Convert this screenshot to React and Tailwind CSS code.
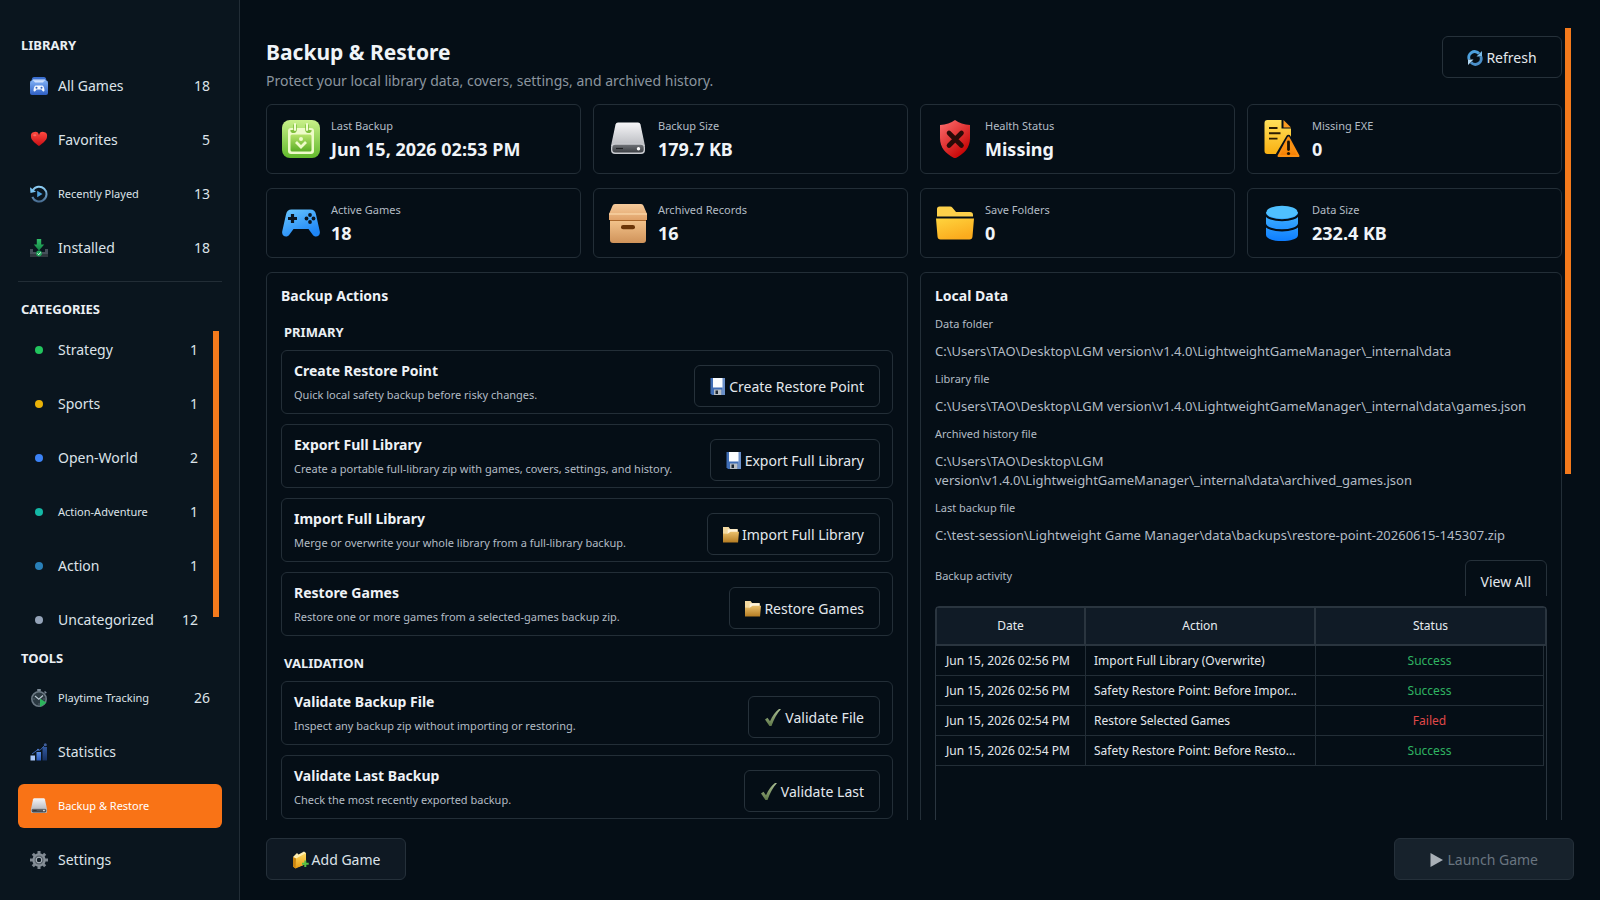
const Gradient = ({ id, from, to, x2 = 0, y2 = 1 }) => (
    <linearGradient id={id} x1="0" y1="0" x2={x2} y2={y2}>
        <stop offset="0" stopColor={from} />
        <stop offset="1" stopColor={to} />
    </linearGradient>
);

/* Sidebar icons */

const AllGamesIcon = () => (
    <svg viewBox="0 0 18 18" className="size-[18px]">
        <defs><Gradient id="ag" from="#7fb0f5" to="#2f5fc4" /></defs>
        <path d="M2 1.5Q2.2 0 4 0h10q1.800 0 2 1.500L16.500 4H1.500z" fill="#3b6fd0" />
        <path d="M3 2.500h12l1 2H2z" fill="#dbe9ff" />
        <rect y="3.500" width="18" height="14.500" rx="2" fill="url(#ag)" />
        <path d="M3.500 3.500h11L13 5.500H5z" fill="#cfe0fb" />
        <path d="M6 8.500h6c1.500 0 2 1.500 2.500 4.500.2 1.600-1.400 2-2.200.8l-.8-1.300h-5l-.8 1.300c-.8 1.200-2.400.8-2.200-.8C4 10 4.500 8.500 6 8.500z" fill="#f4f8ff" />
        <circle cx="6.500" cy="10.700" r="1" fill="#3263bd" />
        <circle cx="11.500" cy="10.700" r="1" fill="#3263bd" />
    </svg>
);

const HeartIcon = () => (
    <svg viewBox="0 0 18 18" className="size-[18px]">
        <defs><Gradient id="ht" from="#ff4a40" to="#c80d14" /></defs>
        <path d="M9 15C5 12 1 9 1 5.700a4 4 0 0 1 8-1.500A4 4 0 0 1 17 5.700c0 3.300-4 6.300-8 9.300z" fill="url(#ht)" />
        <ellipse cx="4.800" cy="4.300" rx="1.600" ry="1" fill="#ff8a80" opacity=".6" />
    </svg>
);

const RecentIcon = () => (
    <svg viewBox="0 0 18 18" className="size-[18px]">
        <defs><Gradient id="rc" from="#8fd0f7" to="#4a6f95" /></defs>
        <path d="M2.800 5.200A7.400 7.400 0 1 1 2.300 12" fill="none" stroke="url(#rc)" strokeWidth="2" />
        <path d="M0 2.300l.5 5.700 5.500-1.300z" fill="#7cc5f2" />
        <path d="M7.200 5.700v6.600l5.300-3.300z" fill="#4d9fdc" />
    </svg>
);

const InstalledIcon = () => (
    <svg viewBox="0 0 18 18" className="size-[18px]">
        <defs><Gradient id="in" from="#33c06b" to="#128443" /></defs>
        <path d="M0 10h3v3h3l1 2h4l1-2h3v-3h3v8H0z" fill="#46505a" />
        <path d="M0 15h18v3H0z" fill="#30383f" />
        <path d="M6.800 0h4.400v5.500h3L9 11.500 3.800 5.500h3z" fill="url(#in)" />
        <circle cx="9" cy="14.500" r="2.900" fill="#21a35a" />
        <path d="M7.500 14.500l1.200 1.200 2-2.300" fill="none" stroke="#eafff2" strokeWidth="1" />
    </svg>
);

const PlaytimeIcon = () => (
    <svg viewBox="0 0 18 18" className="size-[18px]">
        <path d="M7.200 0h3.600v2.500H7.200z" fill="#7d8b98" />
        <path d="M14.500 2.500l1.800 1.600" stroke="#7d8b98" strokeWidth="1.500" />
        <circle cx="9" cy="10" r="7.200" fill="#2b3942" stroke="#6b7984" strokeWidth="1.600" />
        <path d="M5 7l3.800 3.200L13 6.500" fill="none" stroke="#b7c5cf" strokeWidth="1.200" />
        <path d="M3.500 10h1M9 15.500v-1M13.500 10h1" stroke="#7a8893" />
        <path d="M10 9.500v8.500l6.500-4.200z" fill="#2cb45c" />
    </svg>
);

const StatsIcon = () => (
    <svg viewBox="0 0 18 18" className="size-[18px]">
        <defs>
            <Gradient id="st" from="#5b8fe8" to="#2a57b5" />
            <Gradient id="st2" from="#31589f" to="#17305f" />
        </defs>
        <rect x=".5" y="12.500" width="4.500" height="5" fill="#a9c8fa" />
        <rect x="6.500" y="9" width="4.500" height="8.500" fill="url(#st)" />
        <rect x="12.500" y="4" width="4.500" height="13.500" fill="url(#st2)" />
        <path d="M2 11l6-4.500 2 .8L15 2" fill="none" stroke="#3a63b0" strokeWidth="1" />
        <circle cx="15.300" cy="1.800" r="1.500" fill="#41609c" />
        <circle cx="8" cy="6.700" r="1" fill="#4f78c6" />
    </svg>
);

const DriveIcon = ({ className = "size-[18px]" }) => (
    <svg viewBox="0 0 38 38" className={className}>
        <defs>
            <Gradient id="dr" from="#f6f6f8" to="#b9bbc0" />
            <Gradient id="dr2" from="#6d7075" to="#3c3f44" />
        </defs>
        <path d="M6.500 4.500Q7 2.500 9 2.500h20q2 0 2.500 2L36 26H2z" fill="url(#dr)" />
        <rect x="2" y="23.500" width="34" height="10.500" rx="4" fill="#c9cbd0" />
        <rect x="3.300" y="24.800" width="31.400" height="7.800" rx="3" fill="url(#dr2)" />
        <path d="M7 28.500h7" stroke="#1d1f22" strokeWidth="1.200" />
        <circle cx="29.500" cy="28.700" r="1.700" fill="#fff" />
    </svg>
);

const GearIcon = () => (
    <svg viewBox="0 0 18 18" className="size-[18px]">
        <g stroke="#7f8891" strokeWidth="3">
            <path d="M9 0v18M0 9h18M2.800 2.800l12.400 12.400M15.200 2.800L2.800 15.200" />
        </g>
        <circle cx="9" cy="9" r="6.700" fill="#858e97" />
        <circle cx="9" cy="9" r="4.500" fill="#59626b" />
        <circle cx="9" cy="9" r="2.800" fill="#101b24" stroke="#b5bec6" strokeWidth="1" />
    </svg>
);

/* Stat card icons */

const CalendarIcon = () => (
    <svg viewBox="0 0 38 38" className="size-[38px]">
        <defs>
            <Gradient id="cl" from="#c9f08a" to="#62b92b" />
            <Gradient id="cl2" from="#b6e36a" to="#5cae26" />
        </defs>
        <rect width="38" height="38" rx="8" fill="url(#cl)" />
        <rect x="6" y="8" width="26" height="26" rx="3" fill="#eefbc9" />
        <rect x="8.500" y="14.500" width="21" height="17" rx="1.500" fill="url(#cl2)" />
        <path d="M13 4.500v5a1.500 1.500 0 0 1-3 .5M25 4.500v5a1.500 1.500 0 0 0 3 .5" fill="none" stroke="#7fbf3c" strokeWidth="3.600" />
        <path d="M13 4v6M25 4v6" stroke="#f2fdd3" strokeWidth="2" strokeLinecap="round" />
        <circle cx="19" cy="19" r="2" fill="#eefbc9" />
        <path d="M14 22l5 5 5-5" fill="none" stroke="#eefbc9" strokeWidth="2.800" />
    </svg>
);

const ShieldIcon = () => (
    <svg viewBox="0 0 38 38" className="size-[38px]">
        <defs><Gradient id="sh" from="#ff7070" to="#c40000" x2={0.7} /></defs>
        <path d="M19 0c4 3 9 4.700 15 5v13c0 10-6 16-15 20.500C10 34 4 28 4 18V5c6-.3 11-2 15-5z" fill="url(#sh)" />
        <path d="M13 13l12.500 12.500M25.500 13L13 25.500" stroke="#2a0b08" strokeWidth="4.600" strokeLinecap="round" />
    </svg>
);

const MissingFileIcon = () => (
    <svg viewBox="0 0 38 38" className="size-[38px]">
        <defs>
            <Gradient id="mf" from="#ffe05a" to="#f9b012" />
            <Gradient id="mf2" from="#ffac2e" to="#f57c00" />
        </defs>
        <path d="M4.500 0H18.500v8.500H28V34H4.500Q1.500 34 1.500 31V3q0-3 3-3z" fill="url(#mf)" />
        <path d="M20.500 0L28 7.500h-7.500z" fill="#fb9b20" />
        <path d="M6 8h8.500M6 13.300h11.500M6 18.600h8.500" stroke="#2b1d03" strokeWidth="1.900" />
        <path d="M25.500 17L36 36.500H14z" fill="#06101a" stroke="#06101a" strokeWidth="4.500" strokeLinejoin="round" />
        <path d="M25.500 17.500L35.500 36h-20z" fill="url(#mf2)" stroke="#fb8f12" strokeWidth="2" strokeLinejoin="round" />
        <path d="M25.500 22v7.500" stroke="#1d1203" strokeWidth="2.800" strokeLinecap="round" />
        <circle cx="25.500" cy="33.500" r="1.600" fill="#1d1203" />
    </svg>
);

const ControllerIcon = () => (
    <svg viewBox="0 0 38 38" className="size-[38px]">
        <defs><Gradient id="co" from="#6cc8ff" to="#1e86f7" x2={0.6} /></defs>
        <path d="M9.500 5.500h19q4.500 0 5.500 5l3.800 17c.8 4.500-4.500 7-7.300 3l-4-5.500h-15l-4 5.500C4.700 34.500-.6 32 .2 27.500L4 10.500q1-5 5.500-5z" fill="url(#co)" />
        <path d="M10.500 10v9M6 14.500h9" stroke="#0b1520" strokeWidth="3.200" />
        <circle cx="28" cy="11" r="1.900" fill="#0b1520" />
        <circle cx="28" cy="18" r="1.900" fill="#0b1520" />
        <circle cx="24.500" cy="14.500" r="1.900" fill="#0b1520" />
        <circle cx="31.500" cy="14.500" r="1.900" fill="#0b1520" />
    </svg>
);

const ArchiveIcon = () => (
    <svg viewBox="0 0 38 39" className="h-[39px] w-[38px]">
        <defs>
            <Gradient id="ar" from="#f6c891" to="#d0935a" />
            <Gradient id="ar2" from="#f6cb9c" to="#e0a269" />
        </defs>
        <rect x="1" y="14" width="36" height="25" rx="3" fill="url(#ar)" />
        <path d="M1 13.500h36v3.500H1z" fill="#a9662b" />
        <path d="M6 0h26q2 0 2.500 1.800L38 10v6H0v-6l3.500-8.200Q4 0 6 0z" fill="url(#ar2)" />
        <path d="M0 10h38" stroke="#ffe0b4" strokeWidth="1" />
        <rect x="12" y="21" width="14" height="4.300" rx="2.100" fill="#6b3508" />
    </svg>
);

const FolderIcon = () => (
    <svg viewBox="0 0 38 38" className="size-[38px]">
        <defs><Gradient id="fo" from="#ffd43e" to="#fbab1d" x2={0.5} /></defs>
        <path d="M3.500 2.500H14q1.500 0 2.500 1.300L20 8h14q3 0 3 3v1.500H1V5q0-2.500 2.500-2.500z" fill="#fdd04a" />
        <path d="M0 14.500h38l-1.500 18q-.2 3-3 3h-29q-2.800 0-3-3z" fill="url(#fo)" />
    </svg>
);

const DatabaseIcon = () => (
    <svg viewBox="0 0 38 38" className="size-[38px]">
        <defs><Gradient id="db" from="#45b5ff" to="#0d7dff" /></defs>
        <path d="M3 8v23c0 8 32 8 32 0V8z" fill="url(#db)" />
        <path d="M2 7.500v2c2 9 32 9 34 0v-2M2 20c2 8.500 32 8.500 34 0" fill="none" stroke="#050e16" strokeWidth="2.200" />
        <ellipse cx="19" cy="8" rx="15.500" ry="6.300" fill="#4fc0ff" />
    </svg>
);

/* Button icons */

const FloppyIcon = () => (
    <svg viewBox="0 0 16 18" className="h-[18px] w-4">
        <path d="M.5 0h14.500v17H2L.5 15.500z" fill="#3f6db5" />
        <path d="M12 0h3v17h-3z" fill="#6a8fc9" />
        <path d="M3 0h9.500v9.500H3z" fill="#fbfdff" />
        <path d="M4 11.500h7.500V17H4z" fill="#b8bec4" />
        <path d="M5.500 12.500H8V16H5.500z" fill="#1c2733" />
    </svg>
);

const OpenFolderIcon = () => (
    <svg viewBox="0 0 17 18" className="h-[18px] w-4">
        <defs><Gradient id="of" from="#eac06d" to="#b57c22" /></defs>
        <path d="M0 .5h6l1.500 2h8v12H0z" fill="#f3d9a0" />
        <path d="M5 3h10.500v6H5z" fill="#fff4dc" />
        <path d="M0 7.500L5 7.700 8 5.500h9L16 17H0z" fill="url(#of)" />
    </svg>
);

const CheckIcon = () => (
    <svg viewBox="0 0 17 18" className="h-[18px] w-[18px]">
        <defs><Gradient id="ck" from="#a9bd92" to="#5f7848" /></defs>
        <path d="M.5 10.500L3 8.700l2.500 3.500C8 6.500 11 2.500 14.500 0H16.500C12.500 4.500 9.500 10 7 17H5z" fill="url(#ck)" />
    </svg>
);

const RefreshIcon = () => (
    <svg viewBox="0 0 16 16" className="size-4">
        <path d="M2.200 9.500A5.800 5.800 0 0 1 12 3.600" fill="none" stroke="#4da0dd" strokeWidth="2.900" />
        <path d="M13.800 6.500A5.800 5.800 0 0 1 4 12.400" fill="none" stroke="#4b8fc9" strokeWidth="2.900" />
        <path d="M15 1v5.500H9.500z" fill="#79bbea" />
        <path d="M1 15V9.500h5.500z" fill="#b2d8f4" />
    </svg>
);

const AddFolderIcon = () => (
    <svg viewBox="0 0 17 18" className="h-[18px] w-[17px]">
        <defs><Gradient id="af" from="#ffdc62" to="#e79a12" /></defs>
        <path d="M1 6l4-4 1.500 1.500L12 .5l2 1.500v11L3 17z" fill="#ffeeb0" />
        <path d="M1 6l3 1.500L14 2v11L3.500 17.500 1 15.500z" fill="url(#af)" />
        <path d="M1 6l3 1.500-.5 10L1 15.500z" fill="#c98410" />
        <path d="M13.300 9.500v6.500M10 12.800h6.700" stroke="#56c043" strokeWidth="2" />
    </svg>
);

const PlayIcon = () => (
    <svg viewBox="0 0 14 16" className="h-4 w-3.5">
        <path d="M.5 1l12.500 7L.5 15z" fill="#a9b0b7" />
    </svg>
);

const Dot = ({ className }) => (
    <span className="flex w-[18px] justify-center">
        <span className={`size-2 rounded-full ${className}`}></span>
    </span>
);

const library = [
    { icon: <AllGamesIcon />, label: "All Games", count: 18 },
    { icon: <HeartIcon />, label: "Favorites", count: 5 },
    { icon: <RecentIcon />, label: "Recently Played", count: 13, small: true },
    { icon: <InstalledIcon />, label: "Installed", count: 18 },
];

const categories = [
    { icon: <Dot className="bg-[#22c55e]" />, label: "Strategy", count: 1 },
    { icon: <Dot className="bg-[#eab308]" />, label: "Sports", count: 1 },
    { icon: <Dot className="bg-[#3b82f6]" />, label: "Open-World", count: 2 },
    { icon: <Dot className="bg-[#14b8a6]" />, label: "Action-Adventure", count: 1, small: true },
    { icon: <Dot className="bg-[#2980b9]" />, label: "Action", count: 1 },
    { icon: <Dot className="bg-[#94a3b8]" />, label: "Uncategorized", count: 12 },
];

const tools = [
    { icon: <PlaytimeIcon />, label: "Playtime Tracking", count: 26, small: true },
    { icon: <StatsIcon />, label: "Statistics" },
    { icon: <DriveIcon />, label: "Backup & Restore", small: true, active: true },
    { icon: <GearIcon />, label: "Settings" },
];

const stats = [
    { icon: <CalendarIcon />, label: "Last Backup", value: "Jun 15, 2026 02:53 PM" },
    { icon: <DriveIcon className="size-[38px]" />, label: "Backup Size", value: "179.7 KB" },
    { icon: <ShieldIcon />, label: "Health Status", value: "Missing" },
    { icon: <MissingFileIcon />, label: "Missing EXE", value: "0" },
    { icon: <ControllerIcon />, label: "Active Games", value: "18" },
    { icon: <ArchiveIcon />, label: "Archived Records", value: "16" },
    { icon: <FolderIcon />, label: "Save Folders", value: "0" },
    { icon: <DatabaseIcon />, label: "Data Size", value: "232.4 KB" },
];

const primaryActions = [
    { title: "Create Restore Point", text: "Quick local safety backup before risky changes.", icon: <FloppyIcon />, button: "Create Restore Point" },
    { title: "Export Full Library", text: "Create a portable full-library zip with games, covers, settings, and history.", icon: <FloppyIcon />, button: "Export Full Library" },
    { title: "Import Full Library", text: "Merge or overwrite your whole library from a full-library backup.", icon: <OpenFolderIcon />, button: "Import Full Library" },
    { title: "Restore Games", text: "Restore one or more games from a selected-games backup zip.", icon: <OpenFolderIcon />, button: "Restore Games" },
];

const validationActions = [
    { title: "Validate Backup File", text: "Inspect any backup zip without importing or restoring.", icon: <CheckIcon />, button: "Validate File" },
    { title: "Validate Last Backup", text: "Check the most recently exported backup.", icon: <CheckIcon />, button: "Validate Last" },
];

const paths = [
    { label: "Data folder", path: "C:\\Users\\TAO\\Desktop\\LGM version\\v1.4.0\\LightweightGameManager\\_internal\\data" },
    { label: "Library file", path: "C:\\Users\\TAO\\Desktop\\LGM version\\v1.4.0\\LightweightGameManager\\_internal\\data\\games.json" },
    { label: "Archived history file", path: "C:\\Users\\TAO\\Desktop\\LGM version\\v1.4.0\\LightweightGameManager\\_internal\\data\\archived_games.json" },
    { label: "Last backup file", path: "C:\\test-session\\Lightweight Game Manager\\data\\backups\\restore-point-20260615-145307.zip" },
];

const activity = [
    { date: "Jun 15, 2026 02:56 PM", action: "Import Full Library (Overwrite)", status: "Success" },
    { date: "Jun 15, 2026 02:56 PM", action: "Safety Restore Point: Before Impor...", status: "Success" },
    { date: "Jun 15, 2026 02:54 PM", action: "Restore Selected Games", status: "Failed" },
    { date: "Jun 15, 2026 02:54 PM", action: "Safety Restore Point: Before Resto...", status: "Success" },
];

const NavList = ({ items }) => (
    <div className="flex flex-1 flex-col gap-2.5">
        {items.map(item => (
            <button
                key={item.label}
                className={`flex h-11 items-center rounded-md px-3 text-left ${item.active ? 'bg-[#f97316] text-white' : 'text-[#dde3e9]'}`}
            >
                {item.icon}
                <span className={`ml-2.5 flex-1 whitespace-nowrap ${item.small ? 'text-[11px]' : 'text-sm'}`}>{item.label}</span>
                <span className="text-sm">{item.count}</span>
            </button>
        ))}
    </div>
);

const SectionTitle = ({ children, className }) => (
    <h2 className={`pl-[3px] text-[13px] leading-[18px] font-bold text-[#eaeff4] ${className}`}>{children}</h2>
);

const Button = ({ icon, children, className, ...rest }) => (
    <button
        className={`flex h-[42px] shrink-0 items-center justify-center gap-[3px] rounded-md border pt-px text-sm whitespace-nowrap ${className}`}
        {...rest}
    >
        {icon}
        <span>{children}</span>
    </button>
);

const ActionCard = ({ action }) => (
    <div className="flex items-start justify-between rounded-md border border-[#232e37] px-3 pt-2.5 pb-1.5">
        <div>
            <h4 className="text-sm leading-5 font-bold text-[#eef2f6]">{action.title}</h4>
            <p className="mt-1.5 text-[11px] leading-4 text-[#b3bcc5]">{action.text}</p>
        </div>
        <Button icon={action.icon} className="mt-1 border-[#26313a] px-[15px] text-[#e3e8ed]">{action.button}</Button>
    </div>
);

export default function App() {
    return (
        <div className="flex h-screen overflow-hidden bg-[#050e16] font-['Noto_Sans','Open_Sans',sans-serif] text-[#dde3e9]">
            <aside className="w-60 shrink-0 border-r border-[#222d36] bg-[#0a151e] pt-9 pr-[17px] pl-[18px]">
                <SectionTitle>LIBRARY</SectionTitle>
                <nav className="mt-2.5"><NavList items={library} /></nav>
                <hr className="mt-[11px] border-[#222d36]" />
                <SectionTitle className="mt-[18px]">CATEGORIES</SectionTitle>
                <nav className="mt-2.5 flex gap-[3px] pr-[3px]">
                    <NavList items={categories} />
                    <div className="mt-[3px] mb-[25px] w-1.5 bg-[#f47a1c]"></div>
                </nav>
                <SectionTitle className="mt-[7px]">TOOLS</SectionTitle>
                <nav className="mt-[9px]"><NavList items={tools} /></nav>
            </aside>

            <main className="flex min-w-0 flex-1 flex-col px-[26px] pt-7 pb-5">
                <div className="flex min-h-0 flex-1 gap-[3px] overflow-hidden pr-[3px]">
                    <div className="min-w-0 flex-1">
                        <header className="flex items-start justify-between pt-2">
                            <div className="mt-0.5">
                                <h1 className="text-[21px] leading-7 font-bold text-[#f0f4f8]">Backup &amp; Restore</h1>
                                <p className="mt-[5px] text-sm leading-5 text-[#8b959f]">Protect your local library data, covers, settings, and archived history.</p>
                            </div>
                            <Button icon={<RefreshIcon />} className="min-w-[120px] border-[#26313a] px-6 text-[#e3e8ed]">Refresh</Button>
                        </header>

                        <section className="mt-[13px] grid grid-cols-4 gap-x-3 gap-y-3.5">
                            {stats.map(stat => (
                                <div key={stat.label} className="flex h-[70px] items-center gap-[11px] rounded-md border border-[#232e37] pl-[15px]">
                                    {stat.icon}
                                    <div>
                                        <p className="mt-px text-[11px] leading-4 text-[#b3bcc5]">{stat.label}</p>
                                        <p className="mt-[3px] text-lg leading-6 font-bold text-[#f0f4f8]">{stat.value}</p>
                                    </div>
                                </div>
                            ))}
                        </section>

                        <div className="mt-3.5 grid grid-cols-2 gap-3">
                            <section className="rounded-md border border-[#232e37] px-3.5 pt-[13px] pb-6">
                                <h3 className="text-sm leading-5 font-bold text-[#eef2f6]">Backup Actions</h3>
                                <SectionTitle className="mt-[17px]">PRIMARY</SectionTitle>
                                <div className="mt-[9px] flex flex-col gap-2.5">
                                    {primaryActions.map(action => <ActionCard key={action.title} action={action} />)}
                                </div>
                                <SectionTitle className="mt-[18px]">VALIDATION</SectionTitle>
                                <div className="mt-[9px] flex flex-col gap-2.5">
                                    {validationActions.map(action => <ActionCard key={action.title} action={action} />)}
                                </div>
                            </section>

                            <section className="flex flex-col rounded-md border border-[#232e37] px-3.5 pt-[13px]">
                                <h3 className="text-sm leading-5 font-bold text-[#eef2f6]">Local Data</h3>
                                <dl className="mt-2.5 flex flex-col gap-2.5">
                                    {paths.map(item => (
                                        <div key={item.label}>
                                            <dt className="text-[11px] leading-4 text-[#b3bcc5]">{item.label}</dt>
                                            <dd className="mt-2.5 text-[13px] leading-[19px] text-[#b3bcc5]">{item.path}</dd>
                                        </div>
                                    ))}
                                </dl>
                                <div className="mt-[15px] flex h-9 items-start justify-between overflow-hidden">
                                    <h4 className="text-[11px] leading-8 text-[#b3bcc5]">Backup activity</h4>
                                    <Button className="border-[#26313a] px-[15px] text-[#e3e8ed]">View All</Button>
                                </div>
                                <div className="mt-2.5 flex-1 rounded-t-sm border border-[#2a353f]">
                                    <table className="w-full table-fixed border-separate border-spacing-0 text-xs">
                                        <thead>
                                            <tr className="h-[39px] bg-[#101b26] text-[#e6ebf0]">
                                                <th className="w-[150px] border-2 border-t border-l border-[#2a353f] font-normal">Date</th>
                                                <th className="border-t border-r-2 border-b-2 border-[#2a353f] font-normal">Action</th>
                                                <th className="border-t border-r border-b-2 border-[#2a353f] font-normal">Status</th>
                                            </tr>
                                        </thead>
                                        <tbody>
                                            {activity.map((row, index) => (
                                                <tr key={index} className="h-[30px] whitespace-nowrap text-[#e3e8ed]">
                                                    <td className="border-r border-b border-[#232e37] px-2.5">{row.date}</td>
                                                    <td className="overflow-hidden border-r border-b border-[#232e37] px-2">{row.action}</td>
                                                    <td className="h-[30px] p-0 pr-0.5">
                                                        <div className={`flex h-[30px] items-center justify-center border-r border-b border-[#232e37] ${row.status === "Failed" ? 'text-[#e04848]' : 'text-[#2fb362]'}`}>
                                                            {row.status}
                                                        </div>
                                                    </td>
                                                </tr>
                                            ))}
                                        </tbody>
                                    </table>
                                </div>
                            </section>
                        </div>
                    </div>
                    <div className="h-[446px] w-1.5 shrink-0 bg-[#f47a1c]"></div>
                </div>

                <footer className="mt-[18px] flex justify-between">
                    <Button icon={<AddFolderIcon />} className="min-w-[140px] border-[#25303a] bg-[#0f1923] px-[22px] text-[#dde3e9]">Add Game</Button>
                    <Button icon={<PlayIcon />} className="border-[#25303a] bg-[#17222c] px-[35px] text-[#697580]" disabled>Launch Game</Button>
                </footer>
            </main>
        </div>
    );
}
